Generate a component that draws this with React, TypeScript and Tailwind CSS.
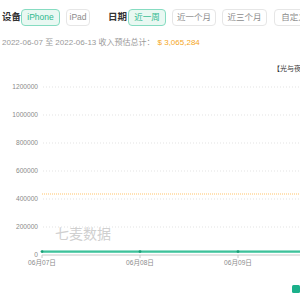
import React from "react";

const font = { fontFamily: '"Liberation Sans", "Noto Sans CJK SC", sans-serif' };

function Btn({ label, active, w }: { label: string; active?: boolean; w: string }) {
  return (
    <div
      className={
        "h-[17px] shrink-0 rounded-[4px] border flex items-center justify-center text-[8.5px] leading-none " +
        w +
        (active
          ? " border-[#86dcc1] bg-[#e9f8f2] text-[#2fb98f]"
          : " border-[#e6e6e6] bg-white text-[#8c8c8c]")
      }
    >
      {label}
    </div>
  );
}

export default function App() {
  const grid = [32, 60, 88, 116, 144, 172];
  const labels = ["1200000", "1000000", "800000", "600000", "400000", "200000"];
  const xs = [42, 140, 238];
  const xl = ["06月07日", "06月08日", "06月09日"];
  return (
    <div className="w-[300px] h-[300px] overflow-hidden bg-white flex flex-col" style={font}>
      <div className="mt-[9px] flex items-center pl-[2px] whitespace-nowrap">
        <span className="text-[9.5px] font-bold text-[#333] w-[21px]">设备</span>
        <Btn label="iPhone" active w="w-[39px]" />
        <div className="w-[6px] shrink-0" />
        <Btn label="iPad" w="w-[24px]" />
        <span className="text-[9.5px] font-bold text-[#333] ml-[18px] w-[20px] shrink-0">日期</span>
        <Btn label="近一周" active w="w-[38px]" />
        <div className="w-[6px] shrink-0" />
        <Btn label="近一个月" w="w-[44px]" />
        <div className="w-[6px] shrink-0" />
        <Btn label="近三个月" w="w-[45px]" />
        <div className="w-[7px] shrink-0" />
        <Btn label="自定义" w="w-[40px]" />
      </div>
      <div className="mt-[12px] pl-[2px] flex items-center text-[8px] leading-[10px] whitespace-nowrap">
        <span className="text-[#999]">2022-06-07 至 2022-06-13 收入预估总计：</span>
        <span className="ml-[3px] text-[#f5a623]">$ 3,065,284</span>
      </div>
      <svg width="300" height="245" className="mt-[7px] shrink-0" style={font}>
        <text x="273" y="16" fontSize="7" fill="#333">【光与夜之恋</text>
        {grid.map((y, i) => (
          <g key={y}>
            <line x1="43" x2="300" y1={y} y2={y} stroke="#e3e3e3" strokeWidth="1" strokeDasharray="1 2" />
            <text x="38" y={y + 2.4} fontSize="6.6" fill="#8a8a8a" textAnchor="end">
              {labels[i]}
            </text>
          </g>
        ))}
        <text x="38" y="202.4" fontSize="6.6" fill="#8a8a8a" textAnchor="end">0</text>
        <text x="55" y="184" fontSize="14" fill="#d0d0d0">七麦数据</text>
        <line x1="42" x2="300" y1="139" y2="139" stroke="#ffc46b" strokeWidth="1.2" strokeDasharray="1 1" />
        <line x1="42" x2="300" y1="200" y2="200" stroke="#c8c8c8" strokeWidth="1" />
        {xs.map((x, i) => (
          <g key={x}>
            <line x1={x} x2={x} y1="200" y2="203" stroke="#c8c8c8" strokeWidth="1" />
            <text x={x} y="209.5" fontSize="6.6" fill="#8a8a8a" textAnchor="middle">
              {xl[i]}
            </text>
          </g>
        ))}
        <line x1="42" x2="300" y1="196.6" y2="196.6" stroke="#6fd3b6" strokeWidth="2.6" />
        <line x1="42" x2="300" y1="196.6" y2="196.6" stroke="#2fb98f" strokeWidth="0.8" />
        {xs.map((x) => (
          <circle key={"c" + x} cx={x} cy="196.6" r="1.4" fill="#1a9e76" />
        ))}
        <rect x="292" y="230" width="8" height="8" rx="1.5" fill="#1bb08a" />
      </svg>
    </div>
  );
}
